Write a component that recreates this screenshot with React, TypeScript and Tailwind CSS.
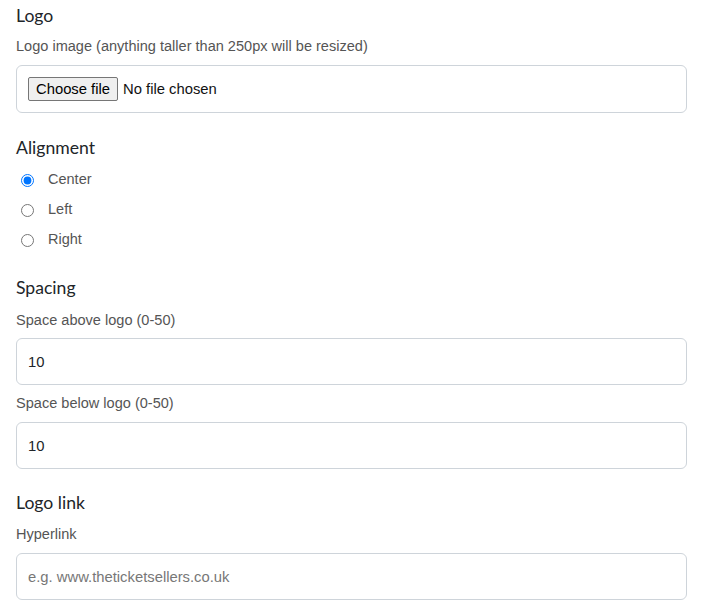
import React from "react";

const heading = "text-[17.6px] leading-[24px] text-[#212529] font-['Lato',sans-serif]";
const label = "block text-[14.55px] leading-[20px] text-[#555] font-['Liberation_Sans',Arial,sans-serif]";
const input =
  "block w-full h-[47px] rounded-[6px] border border-[#ced4da] bg-white px-[11px] text-[14.8px] text-[#212529] placeholder:text-[#777] outline-none font-['Liberation_Sans',Arial,sans-serif]";

export default function App() {
  return (
    <div className="bg-white w-[705px] h-[613px] pl-4 pr-[18px] pt-1 font-['Liberation_Sans',Arial,sans-serif]">
      <div className={heading}>Logo</div>
      <label className={`${label} mt-2`}>Logo image (anything taller than 250px will be resized)</label>
      <div className="mt-[9px] h-[48px] rounded-[6px] border border-[#ced4da] flex items-center px-[11px] text-[14.8px]">
        <button
          type="button"
          className="h-[24px] w-[90px] bg-[#efefef] border border-[#767676] rounded-[2px] text-black text-[14.8px] leading-none"
        >
          Choose file
        </button>
        <span className="ml-[5px] text-[#111]">No file chosen</span>
      </div>

      <div className={`${heading} mt-[23px]`}>Alignment</div>
      <div className="mt-[5px] flex flex-col">
        {["Center", "Left", "Right"].map((t, i) => (
          <label key={t} className="flex items-center h-[30px] text-[14.5px] text-[#555]">
            <input type="radio" name="align" defaultChecked={i === 0} className="ml-[5px] mr-[14px] w-[13px] h-[13px] m-0" />
            <span>{t}</span>
          </label>
        ))}
      </div>

      <div className={`${heading} mt-[21px]`}>Spacing</div>
      <label className={`${label} mt-[10px]`}>Space above logo (0-50)</label>
      <input className={`${input} mt-2`} defaultValue="10" />
      <label className={`${label} mt-2`}>Space below logo (0-50)</label>
      <input className={`${input} mt-[9px]`} defaultValue="10" />

      <div className={`${heading} mt-[22px]`}>Logo link</div>
      <label className={`${label} mt-[9px]`}>Hyperlink</label>
      <input className={`${input} mt-[9px]`} placeholder="e.g. www.theticketsellers.co.uk" />
    </div>
  );
}
